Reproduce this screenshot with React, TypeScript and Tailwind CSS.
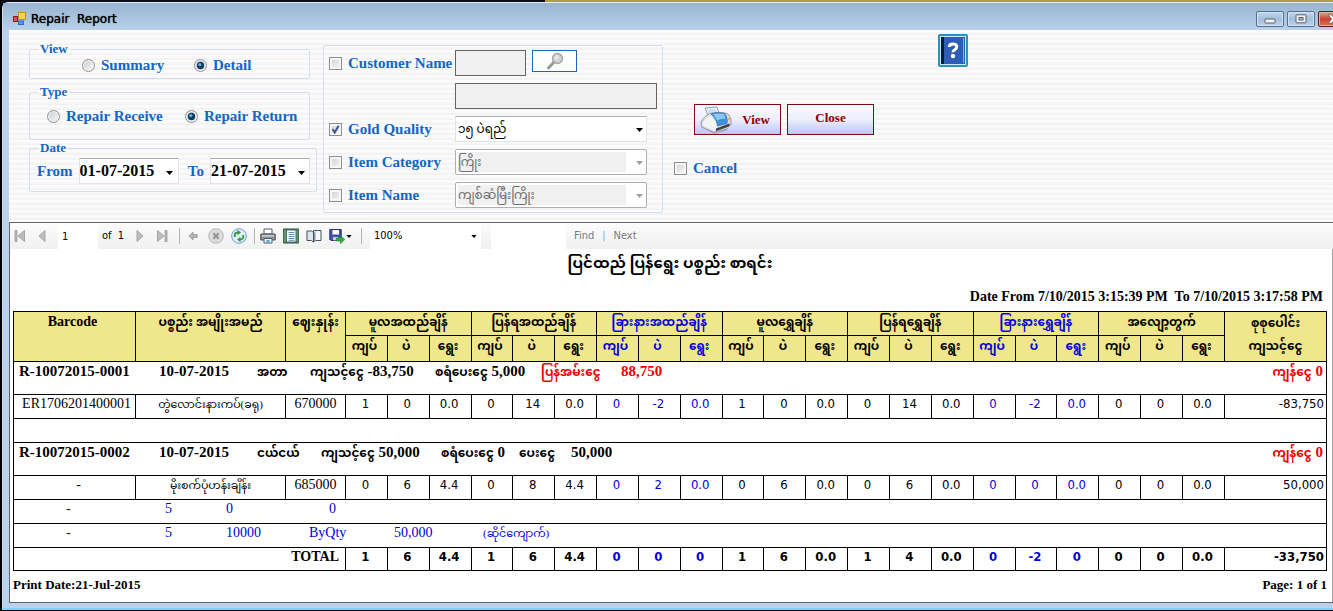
import React from "react";

const SERIF =
  "font-['Liberation_Serif','Noto_Sans_Myanmar','Padauk','Myanmar_Text',serif]";
const SANS =
  "font-['DejaVu_Sans_Condensed','Noto_Sans','Noto_Sans_Myanmar',sans-serif]";

type RowValues = { values: string[]; amount: string };

const groups = [
  { title: "မူလအထည်ချိန်", blue: false },
  { title: "ပြန်ရအထည်ချိန်", blue: false },
  { title: "ခြားနားအထည်ချိန်", blue: true },
  { title: "မူလရွှေချိန်", blue: false },
  { title: "ပြန်ရရွှေချိန်", blue: false },
  { title: "ခြားနားရွှေချိန်", blue: true },
  { title: "အလျော့တွက်", blue: false },
];

const units = ["ကျပ်", "ပဲ", "ရွေး"];

const first: RowValues = {
  values: ["1", "0", "0.0", "0", "14", "0.0", "0", "-2", "0.0", "1", "0", "0.0", "0", "14", "0.0", "0", "-2", "0.0", "0", "0", "0.0"],
  amount: "-83,750",
};
const second: RowValues = {
  values: ["0", "6", "4.4", "0", "8", "4.4", "0", "2", "0.0", "0", "6", "0.0", "0", "6", "0.0", "0", "0", "0.0", "0", "0", "0.0"],
  amount: "50,000",
};
const total: RowValues = {
  values: ["1", "6", "4.4", "1", "6", "4.4", "0", "0", "0", "1", "6", "0.0", "1", "4", "0.0", "0", "-2", "0", "0", "0", "0.0"],
  amount: "-33,750",
};

function Check({ label, checked = false, id }: { label: string; checked?: boolean; id: string }) {
  return (
    <div className="flex items-center gap-1.5">
      <span className="relative flex size-[13px] shrink-0">
        <input
          id={id}
          type="checkbox"
          defaultChecked={checked}
          className="peer size-[13px] appearance-none border border-[#8e8f8f] bg-linear-to-br from-[#cdd0d4] to-[#f8f8f8] shadow-[inset_0_0_0_2px_#f6f6f6]"
        />
        <svg viewBox="0 0 13 13" className="pointer-events-none absolute inset-0 hidden size-[13px] peer-checked:block">
          <path d="M3.5 6 L5.7 9.6 L9.6 2.8" fill="none" stroke="#41528f" strokeWidth="2" />
        </svg>
      </span>
      <label htmlFor={id} className="text-[15px] leading-5 font-bold whitespace-nowrap text-[#1266c4]">
        {label}
      </label>
    </div>
  );
}

function Radio({ label, name, checked = false, id }: { label: string; name: string; checked?: boolean; id: string }) {
  return (
    <div className="flex items-center gap-1.5">
      <span className="relative flex size-[13px] shrink-0">
        <input
          id={id}
          name={name}
          type="radio"
          defaultChecked={checked}
          className="peer size-[13px] appearance-none rounded-full border border-[#8e8f8f] bg-linear-to-br from-[#c9ccd0] to-[#f8f8f8] shadow-[inset_0_0_0_1px_#f6f6f6]"
        />
        <svg viewBox="0 0 13 13" className="pointer-events-none absolute inset-0 hidden size-[13px] peer-checked:block">
          <circle cx="6.5" cy="6.5" r="3.7" fill="#123c5c" />
          <circle cx="5.8" cy="5.6" r="1.6" fill="#62b5dc" />
        </svg>
      </span>
      <label htmlFor={id} className="text-[15px] leading-5 font-bold whitespace-nowrap text-[#1266c4]">
        {label}
      </label>
    </div>
  );
}

function Arrow({ className }: { className: string }) {
  return (
    <svg viewBox="0 0 7 4" className={className} fill="currentColor">
      <path d="M0 0h7L3.5 4z" />
    </svg>
  );
}

function DateBox({ label, value, id }: { label: string; value: string; id: string }) {
  return (
    <div className="flex items-center gap-1.5">
      <label htmlFor={id} className="text-[15px] leading-5 font-bold text-[#1266c4]">
        {label}
      </label>
      <div className="flex h-[26px] w-[100px] items-center border border-[#e2e3ea] border-t-[#abadb3] bg-white">
        <input id={id} defaultValue={value} className="w-0 grow text-[16px] leading-5 font-bold text-black outline-none" />
        <button type="button" aria-label={`${label} calendar`} className="flex w-4 items-center justify-center pt-1 text-black">
          <Arrow className="h-1 w-[7px]" />
        </button>
      </div>
    </div>
  );
}

function Combo({ label, value, disabled = false }: { label: string; value: string; disabled?: boolean }) {
  return (
    <div className="relative h-[26px] w-48">
      <select
        aria-label={label}
        disabled={disabled}
        className="h-full w-full appearance-none border border-[#e2e3ea] border-t-[#abadb3] bg-white pl-0.5 text-[12px] leading-6 text-black disabled:rounded-xs disabled:border-[#afafaf] disabled:bg-[linear-gradient(to_right,#f0f0f0_170px,#fff_170px)] disabled:text-[#6d6d6d] disabled:opacity-100 disabled:shadow-[inset_0_0_0_2px_#fff]"
      >
        <option>{value}</option>
      </select>
      <Arrow
        className={
          disabled
            ? "pointer-events-none absolute top-3 right-1 h-1 w-[7px] text-[#a0a0a0]"
            : "pointer-events-none absolute top-3 right-1 h-1 w-[7px] text-black"
        }
      />
    </div>
  );
}

function TitleBar() {
  return (
    <header className="flex h-[27px] items-center bg-linear-to-b from-[#98b4d1] to-[#b9d1ea]">
      <svg viewBox="0 0 14 14" className="mt-1 mr-1 ml-2.5 size-3.5">
        <rect x="5.500" y="0.5" width="7" height="7" fill="#fbcf52" stroke="#c68f1c" />
        <rect x="0.5" y="4.5" width="4" height="5" fill="#d8564a" stroke="#8d1f1b" />
        <rect x="5.500" y="9" width="5" height="3.5" fill="#5f92e8" stroke="#3467bd" />
      </svg>
      <h1 className="grow pt-1 text-[12px] leading-4 whitespace-pre text-black font-['DejaVu_Sans','Noto_Sans',sans-serif] [text-shadow:0_0_1px_#000]">
        {"Repair  Report"}
      </h1>
      <div className="flex w-[77px] shrink-0 gap-[3px] overflow-hidden pt-1">
        <button type="button" aria-label="Minimize" className="flex h-4 w-7 shrink-0 items-center justify-center rounded-xs border border-[#566f8c] bg-linear-to-b from-[#c4d8ec] via-[#a3bfdb] to-[#b9d3ec] shadow-[inset_0_0_0_1px_#d3e3f3]">
          <svg viewBox="0 0 12 6" className="mt-1 h-1.5 w-3">
            <rect x="1" y="1" width="10" height="4" rx="0.5" fill="#f4f4f4" stroke="#55606e" />
          </svg>
        </button>
        <button type="button" aria-label="Maximize" className="flex h-4 w-7 shrink-0 items-center justify-center rounded-xs border border-[#566f8c] bg-linear-to-b from-[#c4d8ec] via-[#a3bfdb] to-[#b9d3ec] shadow-[inset_0_0_0_1px_#d3e3f3]">
          <svg viewBox="0 0 12 10" className="h-2.5 w-3">
            <rect x="1" y="0.8" width="10" height="8" rx="0.5" fill="#f4f4f4" stroke="#55606e" />
            <rect x="4" y="3.5" width="4" height="2.5" fill="#a9c4df" stroke="#55606e" />
          </svg>
        </button>
        <button type="button" aria-label="Close window" className="flex h-4 w-11 shrink-0 items-center rounded-xs border border-[#5a1a1a] bg-linear-to-b from-[#e2a396] via-[#c5432b] to-[#d4765a] pl-2 shadow-[inset_0_0_0_1px_#eab0a3]">
          <svg viewBox="0 0 13 10" className="h-2.5 w-[13px]">
            <path d="M1 .8h3.4L6.5 3 8.600 .8H12L8.300 5 12 9.200H8.600L6.500 7 4.400 9.200H1L4.700 5z" fill="#fff" stroke="#5a5a66" strokeWidth=".8" />
          </svg>
        </button>
      </div>
    </header>
  );
}

function PrinterPicture() {
  return (
    <svg viewBox="0 0 32 28" className="h-7 w-8 shrink-0">
      <path d="M5 2 17 1l2.500 8-11 1.500z" fill="#e9f4fb" stroke="#7b8b99" strokeWidth=".8" />
      <path d="M7.500 3.500l8-.7 1.500 5-7.500 1z" fill="#c5e3f6" />
      <path d="M1 17c1-4 5-8 9-9.500 6-1.500 12-1.500 17 0 3 1.500 4.500 5 4 11l-17 8L1.500 21z" fill="#dcdddf" stroke="#85878b" strokeWidth=".8" />
      <path d="M2.500 17.500c2-4 5-6.500 8-7.500 4 3 6.500 7 6.500 12l-3 2.500-11-5z" fill="#f4f4f5" />
      <path d="M11 8c4-1.500 9-1.700 13.500-.6C27 10 28 14 27 17.500L17.500 20c-.5-5-3-9-6.500-12z" fill="#3d92df" stroke="#2367a8" strokeWidth=".6" />
      <path d="M13 8.300c4-1 7-1 10.500-.3 1 1.500 1.700 3 2 4.500-3 0-6.500.8-8.700 2-.8-2.200-2-4.200-3.800-6.200z" fill="#8cc6f3" />
      <path d="M16 22.500l13.500-5v2.700L16 25z" fill="#3e4043" />
      <path d="M2 21.500l12 5.500 15-5.500-3 3-12 3.200z" fill="#9b9da1" />
      <circle cx="28.500" cy="13" r="1.300" fill="#f0a63a" />
    </svg>
  );
}

function Separator() {
  return <span className="h-4 w-px shrink-0 bg-[#b5b5b5]" />;
}

function ReportToolbar() {
  return (
    <div className="flex h-[26px] items-center bg-linear-to-b from-[#fcfcfc] to-[#f0f0f0] pl-1 text-[11px] leading-4 text-black font-['DejaVu_Sans_Condensed','Noto_Sans',sans-serif]">
      <button type="button" aria-label="First page" className="mr-3 w-3">
        <svg viewBox="0 0 12 14" className="h-3.5 w-3" fill="#bdbdbd" stroke="#979797" strokeWidth=".8">
          <path d="M1 1.500h2v11H1zM10.500 1.500v11L4 7z" />
        </svg>
      </button>
      <button type="button" aria-label="Previous page" className="mr-3 w-2">
        <svg viewBox="0 0 8 14" className="h-3.5 w-2" fill="#bdbdbd" stroke="#979797" strokeWidth=".8">
          <path d="M7 1.500v11L1 7z" />
        </svg>
      </button>
      <input aria-label="Current page" defaultValue="1" className="h-[25px] w-10 shrink-0 bg-white pl-1 outline-none" />
      <span className="ml-1 w-[34px] whitespace-pre">{"of  1"}</span>
      <button type="button" aria-label="Next page" className="mr-3 w-2">
        <svg viewBox="0 0 8 14" className="h-3.5 w-2" fill="#bdbdbd" stroke="#979797" strokeWidth=".8">
          <path d="M1 1.500v11L7 7z" />
        </svg>
      </button>
      <button type="button" aria-label="Last page" className="mr-[11px] w-3">
        <svg viewBox="0 0 12 14" className="h-3.5 w-3" fill="#bdbdbd" stroke="#979797" strokeWidth=".8">
          <path d="M9 1.500h2v11H9zM1.500 1.500v11L8 7z" />
        </svg>
      </button>
      <Separator />
      <button type="button" aria-label="Back" className="mr-2.5 ml-2 w-2.5">
        <svg viewBox="0 0 10 10" className="size-2.5" fill="#b4b4b4" stroke="#8f8f8f" strokeWidth=".7">
          <path d="M.8 5 5 1v2.500h4.200v3H5V9z" />
        </svg>
      </button>
      <button type="button" aria-label="Stop" className="mr-[7px] w-4">
        <svg viewBox="0 0 16 16" className="size-4">
          <circle cx="8" cy="8" r="7.300" fill="#dcdcdc" stroke="#b5b5b5" />
          <path d="M5.300 5.300l5.400 5.400M10.700 5.300l-5.400 5.400" stroke="#949494" strokeWidth="2.200" />
        </svg>
      </button>
      <button type="button" aria-label="Refresh" className="mr-[7px] w-4">
        <svg viewBox="0 0 16 16" className="size-4">
          <circle cx="8" cy="8" r="7.300" fill="#e3effb" stroke="#6c9bd6" />
          <path d="M3.800 9V6.500Q4 4.500 7 4.500" fill="none" stroke="#2e9e3c" strokeWidth="1.800" />
          <path d="M6.500 1.800 10 4.500 6.500 7.200z" fill="#2e9e3c" />
          <path d="M12.200 7v2.500q-.2 2-3.200 2" fill="none" stroke="#2e9e3c" strokeWidth="1.800" />
          <path d="M9.500 8.800 6 11.500l3.500 2.700z" fill="#2e9e3c" />
        </svg>
      </button>
      <Separator />
      <button type="button" aria-label="Print" className="mr-[7px] ml-[5px] w-4">
        <svg viewBox="0 0 16 16" className="size-4">
          <path d="M4 1h8v5H4z" fill="#fff" stroke="#555c66" />
          <path d="M.8 6h14.400v6H.8z" fill="#8e949c" stroke="#4a5058" />
          <path d="M2 7.200h12v1.300H2z" fill="#d5d9de" />
          <path d="M4 10.500h8V15H4z" fill="#eaf4fd" stroke="#555c66" />
          <path d="M6.500 12h3v2.500h-3z" fill="#4fa3dd" />
        </svg>
      </button>
      <button type="button" aria-label="Print layout" className="mr-[7px] w-4">
        <svg viewBox="0 0 16 16" className="size-4">
          <rect x=".7" y="1" width="14.600" height="14" fill="#6ba06f" stroke="#28503a" />
          <rect x="3.500" y="2" width="9.500" height="12" fill="#fff" stroke="#2f4b6c" strokeWidth=".8" />
          <path d="M5.500 4.500h6M5.500 6.500h6M5.500 8.500h6M5.500 10.500h6M5.500 12.300h6" stroke="#4a6f99" strokeWidth=".8" />
        </svg>
      </button>
      <button type="button" aria-label="Page setup" className="mr-[7px] w-4">
        <svg viewBox="0 0 16 16" className="size-4">
          <path d="M1 3h4.500l2 1.500V14l-2-1.500H1z" fill="#dfe6ee" stroke="#46505e" />
          <path d="M7.500 4.500V2.500H15v10H9.500L7.500 14z" fill="#f7f9fb" stroke="#46505e" />
          <path d="M8 4.500V13l1.500-1V3z" fill="#8797aa" />
        </svg>
      </button>
      <button type="button" aria-label="Export" className="mr-2 flex w-6 items-center">
        <svg viewBox="0 0 16 16" className="size-4 shrink-0">
          <path d="M.8 1.500h11.400v11H2L.8 11.300z" fill="#4453a5" stroke="#28306f" />
          <path d="M3.500 2h6.500v4.500H3.500z" fill="#fff" />
          <path d="M4 9h5.500v3.300H4z" fill="#c9cfe8" />
          <path d="M7.500 10h4V7.500L15.800 11.500l-4.300 4V13h-4z" fill="#31b33d" stroke="#16762a" strokeWidth=".6" />
        </svg>
        <Arrow className="ml-px h-[3px] w-1.5 shrink-0" />
      </button>
      <Separator />
      <div className="relative ml-2 h-[26px] w-[111px] shrink-0">
        <select aria-label="Zoom" className="h-full w-full appearance-none bg-white pl-1">
          <option>100%</option>
        </select>
        <Arrow className="pointer-events-none absolute top-3 right-1 h-[3px] w-1.5" />
      </div>
      <input aria-label="Search text" className="ml-2.5 h-[25px] w-[75px] shrink-0 bg-white outline-none" />
      <button type="button" className="ml-2 text-[#7a7a7a]">Find</button>
      <span className="mx-2 text-[#a0a0a0]">|</span>
      <button type="button" className="text-[#7a7a7a]">Next</button>
    </div>
  );
}

function FilterForm() {
  return (
    <form className="flex h-48 items-start bg-[repeating-linear-gradient(to_bottom,#fdfdfd_0px,#fafafa_2px,#f0f0f0_5px)] pl-5">
      <div className="mt-[13px] w-[288px] shrink-0">
        <fieldset className="mr-[7px] h-9 rounded-xs border border-[#d5dfe9]">
          <legend className="ml-2 px-0.5 text-[13px] leading-3 font-bold text-[#1266c4]">View</legend>
          <div className="flex pl-[52px]">
            <div className="w-28 shrink-0"><Radio id="summary" name="view" label="Summary" /></div>
            <Radio id="detail" name="view" label="Detail" checked />
          </div>
        </fieldset>
        <fieldset className="mt-[7px] mr-[7px] h-[54px] rounded-xs border border-[#d5dfe9]">
          <legend className="ml-2 px-0.5 text-[13px] leading-3 font-bold text-[#1266c4]">Type</legend>
          <div className="flex pt-2 pl-[17px]">
            <div className="w-[138px] shrink-0"><Radio id="receive" name="type" label="Repair Receive" /></div>
            <Radio id="return" name="type" label="Repair Return" checked />
          </div>
        </fieldset>
        <fieldset className="mt-0.5 h-[50px] rounded-xs border border-[#d5dfe9]">
          <legend className="ml-2 px-0.5 text-[13px] leading-3 font-bold text-[#1266c4]">Date</legend>
          <div className="flex justify-between pt-1 pr-1.5 pl-[7px]">
            <DateBox id="from" label="From" value="01-07-2015" />
            <DateBox id="to" label="To" value="21-07-2015" />
          </div>
        </fieldset>
      </div>

      <div className="mt-[15px] ml-1.5 grid w-[340px] shrink-0 grid-cols-[126px_1fr] items-center gap-y-[7px] rounded-xs border border-[#d5dfe9] pt-1 pb-1 pl-[5px]">
        <Check id="customer" label="Customer Name" />
        <div className="flex gap-1.5">
          <input aria-label="Customer code" disabled className="h-[26px] w-[71px] border border-[#646464] bg-[#f0f0f0]" />
          <button type="button" aria-label="Find customer" className="flex h-[22px] w-[45px] items-center justify-center border border-[#1f66ae] bg-white">
            <svg viewBox="0 0 18 18" className="size-[18px]">
              <path d="M8.500 9.500 2.500 16" stroke="#9b9b9b" strokeWidth="3" strokeLinecap="round" />
              <circle cx="11.500" cy="6.500" r="5" fill="#d2d2d2" stroke="#a6a6a6" strokeWidth="1.400" />
              <circle cx="10.500" cy="5.500" r="2.300" fill="#e6e6e6" />
            </svg>
          </button>
        </div>
        <input aria-label="Customer full name" disabled className="col-start-2 h-[26px] w-[202px] border border-[#646464] bg-[#f0f0f0]" />
        <Check id="quality" label="Gold Quality" checked />
        <Combo label="Gold Quality" value="၁၅ ပဲရည်" />
        <Check id="category" label="Item Category" />
        <Combo label="Item Category" value="ကြိုး" disabled />
        <Check id="item" label="Item Name" />
        <Combo label="Item Name" value="ကျစ်ဆံမြီးကြိုး" disabled />
      </div>

      <div className="mt-[74px] ml-[11px] shrink-0">
        <div className="flex gap-1.5 pl-5">
          <button type="button" className="flex h-[31px] w-[87px] items-center justify-between border border-[#7a0c14] bg-linear-to-b from-[#fbfaff] via-[#eeeefd] to-[#b7c8f6] pr-2.5 pl-[5px] text-[13px] leading-4 font-bold text-[#8b0000]">
            <PrinterPicture />
            View
          </button>
          <button type="button" className="h-[31px] w-[87px] border border-[#7a0c14] bg-linear-to-b from-[#fbfaff] via-[#eeeefd] to-[#b7c8f6] pb-1 text-[13px] leading-4 font-bold text-[#8b0000]">
            Close
          </button>
        </div>
        <div className="mt-[23px]"><Check id="cancel" label="Cancel" /></div>
      </div>

      <button type="button" aria-label="Help" className="mt-1 ml-16 flex h-[33px] w-[30px] items-center justify-center rounded-xs border-2 border-[#2b93b8] bg-[#bff0fa]">
        <svg viewBox="0 0 24 27" className="h-[27px] w-6">
          <rect width="24" height="27" fill="#2f5db5" />
          <rect width="3" height="27" fill="#0c1830" />
          <path d="M22.500 1v25" stroke="#9aa9c9" />
          <path d="M8.200 10q.2-3 3.800-3t3.800 2.800q0 1.800-2 2.900t-1.800 2.600" fill="none" stroke="#fff" strokeWidth="3" />
          <circle cx="12" cy="19" r="2.200" fill="#fff" />
        </svg>
      </button>
    </form>
  );
}

function isBlue(i: number) {
  return groups[Math.floor(i / 3)].blue;
}

function ValueCells({ row, bold = false }: { row: RowValues; bold?: boolean }) {
  return (
    <>
      {row.values.map((v, i) => (
        <td
          key={i}
          className={`${SANS} border border-black pr-0.5 text-center align-top text-[13px] leading-[18px] ${isBlue(i) ? "text-[#0000e0]" : "text-black"} ${bold ? "font-bold" : ""}`}
        >
          {v}
        </td>
      ))}
      <td className={`${SANS} border border-black pr-0.5 text-right align-top text-[13px] leading-[18px] ${bold ? "font-bold" : ""}`}>{row.amount}</td>
    </>
  );
}

function ReportTable() {
  return (
    <table className="w-full table-fixed border-collapse border border-black text-[14px] leading-[18px] whitespace-nowrap">
      <colgroup>
        <col className="w-[122px]" />
        <col className="w-[150px]" />
        <col className="w-[60px]" />
        {first.values.map((_, i) => (
          <col key={i} />
        ))}
        <col className="w-[102px]" />
      </colgroup>
      <thead className="bg-[#f0e68c] text-[12px] leading-5">
        <tr className="h-6">
          <th rowSpan={2} className="border border-black pr-1 align-top text-[14px]">Barcode</th>
          <th rowSpan={2} className="border border-black align-top">ပစ္စည်း အမျိုးအမည်</th>
          <th rowSpan={2} className="border border-black align-top">ဈေးနှုန်း</th>
          {groups.map((g) => (
            <th key={g.title} colSpan={3} className={g.blue ? "border border-black align-top text-[#0000e0]" : "border border-black align-top"}>
              {g.title}
            </th>
          ))}
          <th rowSpan={2} className="border border-black align-top leading-[23px]">
            စုစုပေါင်း
            <br />
            ကျသင့်ငွေ
          </th>
        </tr>
        <tr className="h-[26px]">
          {groups.flatMap((g) =>
            units.map((u) => (
              <th key={g.title + u} className={g.blue ? "border border-black pr-1 align-top text-[#0000e0]" : "border border-black pr-1 align-top"}>
                {u}
              </th>
            ))
          )}
        </tr>
      </thead>
      <tbody>
        <tr className="h-[33px] font-bold">
          <td colSpan={25} className="border border-black px-[3px] align-top text-[15px]">
            <div className="flex items-baseline pl-0.5">
              <span className="w-[140px]">R-10072015-0001</span>
              <span className="w-[98px]">10-07-2015</span>
              <span className="w-[53px] text-[12px]">အတာ</span>
              <span className="w-[125px]"><span className="text-[12px]">ကျသင့်ငွေ</span> -83,750</span>
              <span className="w-[106px]"><span className="text-[12px]">စရံပေးငွေ</span> 5,000</span>
              <span className="w-20 text-[12px] text-[#f00000]">ပြန်အမ်းငွေ</span>
              <span className="grow text-[#f00000]">88,750</span>
              <span className="text-[#f00000]"><span className="text-[12px]">ကျန်ငွေ</span> 0</span>
            </div>
          </td>
        </tr>
        <tr className="h-6">
          <td className="border border-black pr-1 text-right align-top">ER1706201400001</td>
          <td className="border border-black text-center align-top text-[11px]">တွဲလောင်းနားကပ်(ခရု)</td>
          <td className="border border-black text-center align-top">670000</td>
          <ValueCells row={first} />
        </tr>
        <tr className="h-6">
          <td colSpan={25} className="border border-black" />
        </tr>
        <tr className="h-[33px] font-bold">
          <td colSpan={25} className="border border-black px-[3px] align-top text-[15px]">
            <div className="flex items-baseline pl-0.5">
              <span className="w-[140px]">R-10072015-0002</span>
              <span className="w-[98px]">10-07-2015</span>
              <span className="w-16 text-[12px]">ငယ်ငယ်</span>
              <span className="w-[120px]"><span className="text-[12px]">ကျသင့်ငွေ</span> 50,000</span>
              <span className="w-[78px]"><span className="text-[12px]">စရံပေးငွေ</span> 0</span>
              <span className="w-[52px] text-[12px]">ပေးငွေ</span>
              <span className="grow">50,000</span>
              <span className="text-[#f00000]"><span className="text-[12px]">ကျန်ငွေ</span> 0</span>
            </div>
          </td>
        </tr>
        <tr className="h-6">
          <td className="border border-black pl-2 text-center align-top">-</td>
          <td className="border border-black text-center align-top text-[11px]">မိုးစက်ပုံဟန်းချိန်း</td>
          <td className="border border-black text-center align-top">685000</td>
          <ValueCells row={second} />
        </tr>
        <tr className="h-6 text-[#0000e0]">
          <td colSpan={25} className="border border-black align-top">
            <div className="flex">
              <span className="w-[151px] pl-[52px]">-</span>
              <span className="w-[61px]">5</span>
              <span className="w-[103px]">0</span>
              <span>0</span>
            </div>
          </td>
        </tr>
        <tr className="h-6 text-[#0000e0]">
          <td colSpan={25} className="border border-black align-top">
            <div className="flex">
              <span className="w-[151px] pl-[52px]">-</span>
              <span className="w-[61px]">5</span>
              <span className="w-[83px]">10000</span>
              <span className="w-[85px]">ByQty</span>
              <span className="w-[89px]">50,000</span>
              <span className="text-[11px]">(ဆိုင်ကျောက်)</span>
            </div>
          </td>
        </tr>
        <tr className="h-[23px]">
          <td colSpan={3} className="border border-black pr-1.5 text-right align-top font-bold">TOTAL</td>
          <ValueCells row={total} bold />
        </tr>
      </tbody>
    </table>
  );
}

export default function App() {
  return (
    <div className={`${SERIF} flex min-h-screen flex-col overflow-x-hidden bg-black pb-px pl-0.5 text-black`}>
      <div className="h-0.5 bg-[linear-gradient(to_right,#0b0d18_543px,#b0a03c_543px)]" />
      <div className="flex grow flex-col rounded-tl-md border-t border-b-2 border-l border-t-[#e4edf6] border-b-[#7fd0f2] border-l-[#c8dcf0] bg-[#b9d1ea] pb-[5px]">
        <TitleBar />
        <div className="ml-1.5 flex grow flex-col">
          <FilterForm />
          <main className="flex grow flex-col border-t border-b border-l border-[#646464] bg-white">
            <ReportToolbar />
            <section className="flex grow flex-col border-r border-[#a0a0a0] pr-[5px] pl-[3px]">
              <h2 className="pt-0.5 pb-0.5 text-center text-[15px] leading-6 font-bold">ပြင်ထည် ပြန်ရွေး ပစ္စည်း စာရင်း</h2>
              <p className="mt-[10px] mb-1 pr-1 text-right text-[14px] leading-5 font-bold whitespace-pre">
                {"Date From 7/10/2015 3:15:39 PM  To 7/10/2015 3:17:58 PM"}
              </p>
              <ReportTable />
              <footer className="flex justify-between pt-1 text-[13px] leading-5 font-bold">
                <span>Print Date:21-Jul-2015</span>
                <span>Page: 1 of 1</span>
              </footer>
            </section>
          </main>
        </div>
      </div>
    </div>
  );
}
